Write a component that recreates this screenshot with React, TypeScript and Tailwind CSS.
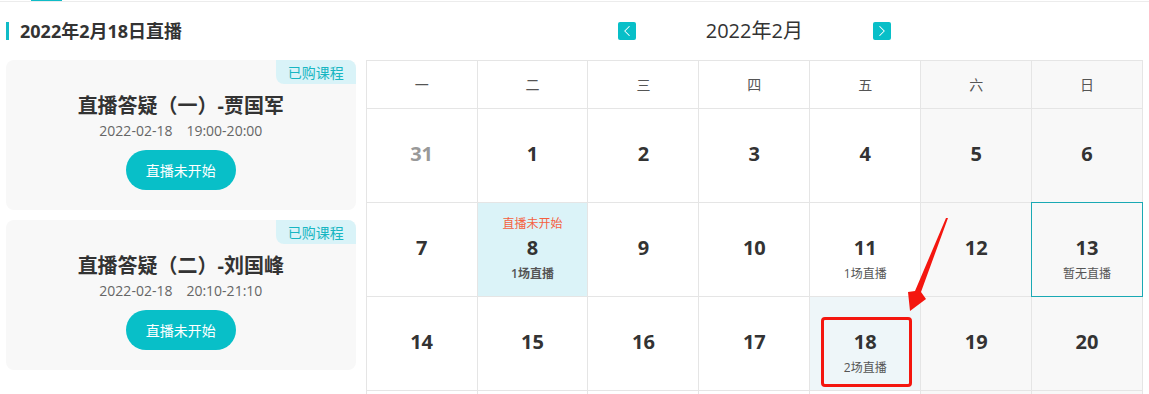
import { ChevronLeft, ChevronRight } from 'lucide-react';

const weekdays = ['一', '二', '三', '四', '五', '六', '日'];

type Day = {
    day: number;
    muted?: boolean;
    top?: string;
    sub?: string;
    subBold?: boolean;
    variant?: 'live' | 'current' | 'selected';
    marked?: boolean;
};

const days: Day[] = [
    { day: 31, muted: true }, { day: 1 }, { day: 2 }, { day: 3 }, { day: 4 }, { day: 5 }, { day: 6 },
    { day: 7 }, { day: 8, top: '直播未开始', sub: '1场直播', subBold: true, variant: 'live' }, { day: 9 }, { day: 10 },
    { day: 11, sub: '1场直播' }, { day: 12 }, { day: 13, sub: '暂无直播', variant: 'selected' },
    { day: 14 }, { day: 15 }, { day: 16 }, { day: 17 }, { day: 18, sub: '2场直播', variant: 'current', marked: true },
    { day: 19 }, { day: 20 },
];

const lessons = [
    { title: '直播答疑（一）-贾国军', date: '2022-02-18', time: '19:00-20:00' },
    { title: '直播答疑（二）-刘国峰', date: '2022-02-18', time: '20:10-21:10' },
];

function LessonCard({ title, date, time }: { title: string; date: string; time: string }) {
    return (
        <div className="relative flex h-[150px] flex-col items-center rounded-[8px] bg-[#f8f8f8] pt-[32px]">
            <div className="absolute right-0 top-0 flex h-[24px] w-[80px] items-center justify-center rounded-bl-[8px] rounded-tr-[8px] bg-[#d9f3f8] text-[14px] text-[#17b6c2]">
                已购课程
            </div>
            <div className="text-[20px] font-bold leading-[28px] text-[#333]">{title}</div>
            <div className="mt-px flex gap-[14px] text-[14px] leading-[20px] text-[#666]">
                <span>{date}</span>
                <span>{time}</span>
            </div>
            <button className="mt-[9px] h-[40px] w-[110px] rounded-full bg-[#08bfc8] text-[14px] text-white">
                直播未开始
            </button>
        </div>
    );
}

function DayCell({ d, index }: { d: Day; index: number }) {
    const weekend = index % 7 >= 5;
    let bg = weekend ? 'bg-[#f8f8f8]' : 'bg-white';
    if (d.variant === 'live') bg = 'bg-[#dbf3f8]';
    if (d.variant === 'current') bg = 'bg-[#eef6f9]';

    return (
        <div className={`relative flex h-[94px] flex-col items-center justify-center border-b border-r border-[#e5e5e5] ${bg}`}>
            {d.variant === 'selected' && <div className="absolute -left-px -top-px h-[95px] w-[112px] border border-[#1aa9b4]" />}
            {d.marked && <div className="absolute left-[11px] top-[20px] h-[70px] w-[91px] rounded-[4px] border-[3px] border-[#f4160f]" />}
            <div className="h-[20px] text-[12px] leading-[20px] text-[#f5603f]">{d.top}</div>
            <div className={`text-[20px] font-bold leading-[28px] ${d.muted ? 'text-[#999]' : 'text-[#333]'}`}>{d.day}</div>
            <div className={`h-[24px] text-[12px] leading-[24px] text-[#555] ${d.subBold ? 'font-semibold' : ''}`}>{d.sub}</div>
        </div>
    );
}

export default function App() {
    return (
        <div className="relative h-[394px] w-[1149px] overflow-hidden bg-white" style={{ fontFamily: '"Open Sans", "Noto Sans CJK SC", sans-serif' }}>
            <div className="h-px">
                <div className="ml-[31px] h-px w-[31px] bg-[#10bcc7]" />
            </div>
            <div className="h-px bg-[#ececec]" />

            <div className="flex gap-[10px] px-[6px]">
                <div className="w-[350px]">
                    <div className="flex h-[58px] items-center gap-[11px]">
                        <div className="h-[18px] w-[3px] bg-[#10bcc7]" />
                        <div className="text-[18px] font-bold text-[#333]">2022年2月18日直播</div>
                    </div>
                    <div className="flex flex-col gap-[10px]">
                        {lessons.map((l) => (
                            <LessonCard key={l.title} {...l} />
                        ))}
                    </div>
                </div>

                <div className="w-[778px]">
                    <div className="flex h-[58px] items-center justify-center">
                        <button className="flex h-[18px] w-[18px] items-center justify-center rounded-[2px] bg-[#08bfc8] text-white">
                            <ChevronLeft size={20} strokeWidth={1.4} />
                        </button>
                        <div className="w-[237px] text-center text-[20px] text-[#333]">2022年2月</div>
                        <button className="flex h-[18px] w-[18px] items-center justify-center rounded-[2px] bg-[#08bfc8] text-white">
                            <ChevronRight size={20} strokeWidth={1.4} />
                        </button>
                    </div>
                    <div className="grid grid-cols-7 border-l border-t border-[#e5e5e5]">
                        {weekdays.map((w, i) => (
                            <div key={w} className={`flex h-[48px] items-center justify-center border-b border-r border-[#e5e5e5] text-[14px] text-[#555] ${i >= 5 ? 'bg-[#f8f8f8]' : 'bg-white'}`}>
                                {w}
                            </div>
                        ))}
                        {days.map((d, i) => (
                            <DayCell key={i} d={d} index={i} />
                        ))}
                        {weekdays.map((w, i) => (
                            <div key={`next-${w}`} className={`h-[94px] border-b border-r border-[#e5e5e5] ${i >= 5 ? 'bg-[#f8f8f8]' : 'bg-white'}`} />
                        ))}
                    </div>
                </div>
            </div>

            <svg className="pointer-events-none absolute left-0 top-0" width="1149" height="394">
                <polygon points="948,218 921,292 926,299 910,311 908,292 915,291 946,218" fill="#f4160f" />
            </svg>
        </div>
    );
}
